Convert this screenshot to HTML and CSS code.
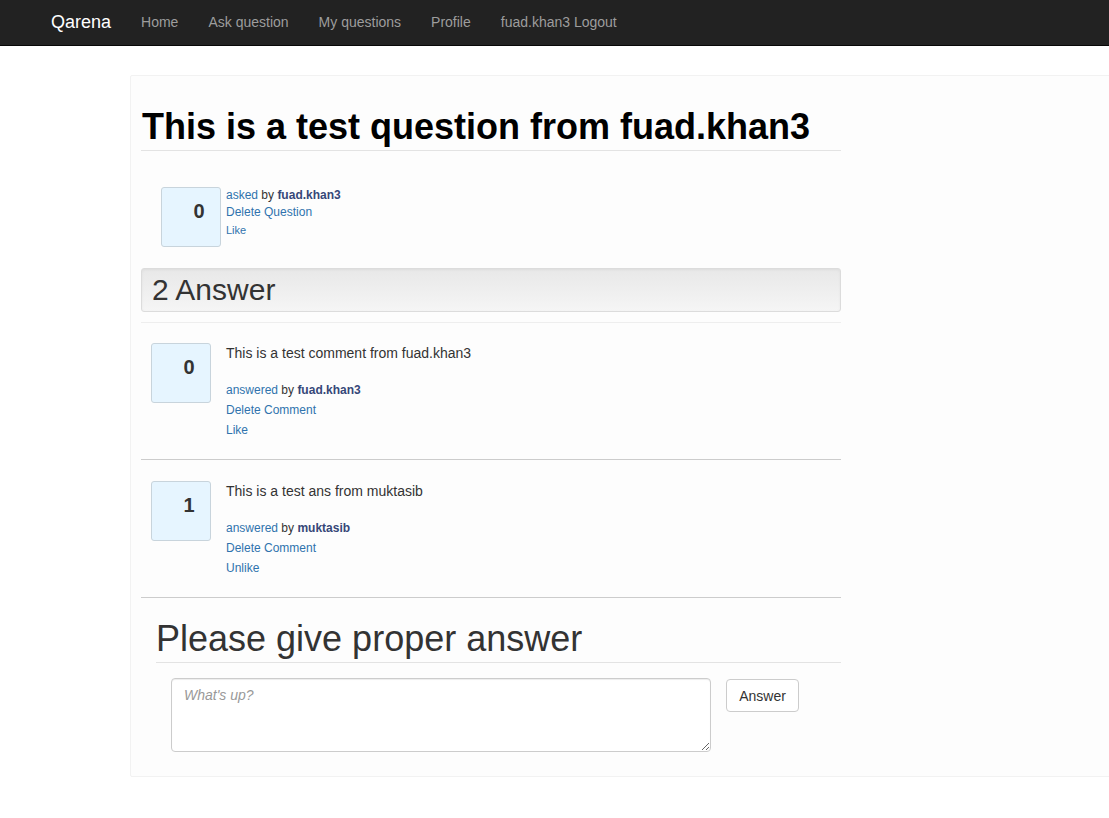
FILE: index.html
```html
<!DOCTYPE html>
<html>
<head>
<meta charset="utf-8">
<title>Qarena</title>
<link rel="stylesheet" href="styles.css">
</head>
<body>
<nav class="navbar">
  <a class="brand" href="#">Qarena</a>
  <ul class="nav-links">
    <li><a href="#">Home</a></li>
    <li><a href="#">Ask question</a></li>
    <li><a href="#">My questions</a></li>
    <li><a href="#">Profile</a></li>
    <li><a href="#">fuad.khan3 Logout</a></li>
  </ul>
</nav>
<main class="page">
  <section class="panel">
    <div class="col">
      <h1 class="q-title">This is a test question from fuad.khan3</h1>
      <div class="question-row">
        <div class="vote">0</div>
        <div class="q-meta">
          <div><a href="#">asked</a> by <a class="user" href="#">fuad.khan3</a></div>
          <div><a href="#">Delete Question</a></div>
          <div class="small"><a href="#">Like</a></div>
        </div>
      </div>
      <div class="well">2 Answer</div>
      <hr class="hr-light">
      <div class="answer">
        <div class="vote">0</div>
        <div class="a-body">
          <p class="a-text">This is a test comment from fuad.khan3</p>
          <div class="a-meta">
            <div><a href="#">answered</a> by <a class="user" href="#">fuad.khan3</a></div>
            <div><a href="#">Delete Comment</a></div>
            <div><a href="#">Like</a></div>
          </div>
        </div>
      </div>
      <hr class="hr-dark">
      <div class="answer">
        <div class="vote">1</div>
        <div class="a-body">
          <p class="a-text">This is a test ans from muktasib</p>
          <div class="a-meta">
            <div><a href="#">answered</a> by <a class="user" href="#">muktasib</a></div>
            <div><a href="#">Delete Comment</a></div>
            <div><a href="#">Unlike</a></div>
          </div>
        </div>
      </div>
      <hr class="hr-dark">
      <div class="reply">
        <h2 class="reply-title">Please give proper answer</h2>
        <form class="reply-form">
          <textarea class="reply-input" placeholder="What's up?"></textarea>
          <button type="button" class="btn">Answer</button>
        </form>
      </div>
    </div>
  </section>
</main>
</body>
</html>
```

FILE: styles.css
```css
html, body {
  margin: 0;
  padding: 0;
  overflow-x: hidden;
  background: #fff;
  font-family: "Liberation Sans", Arial, Helvetica, sans-serif;
  font-size: 14px;
  line-height: 1.42857;
  color: #333;
}

a {
  color: #2f73ad;
  text-decoration: none;
}

.navbar {
  display: flex;
  align-items: center;
  height: 46px;
  box-sizing: border-box;
  background: #222;
  border-bottom: 1px solid #080808;
  padding: 0 0 2px 36px;
}

.brand {
  color: #fff;
  font-size: 18px;
  line-height: 20px;
  padding: 0 15px;
}

.nav-links {
  display: flex;
  list-style: none;
  margin: 0;
  padding: 0;
}

.nav-links a {
  display: block;
  color: #9d9d9d;
  font-size: 14px;
  line-height: 20px;
  padding: 0 15px;
}

.page {
  padding: 29px 0 40px 130px;
}

.panel {
  width: 1000px;
  background: #fdfdfd;
  border: 1px solid #f2f2f2;
  border-radius: 2px;
  padding: 31px 0 24px 10px;
  box-sizing: border-box;
}

.col {
  width: 700px;
}

.q-title {
  margin: 0;
  font-size: 36px;
  font-weight: bold;
  line-height: 39.6px;
  color: #000;
  padding: 0 0 3px 1px;
  border-bottom: 1px solid #e3e3e3;
}

.question-row {
  display: flex;
  align-items: flex-start;
  margin: 36px 0 0 20px;
}

.vote {
  width: 60px;
  height: 60px;
  box-sizing: border-box;
  background: #e6f5ff;
  border: 1px solid #c8d4dc;
  border-radius: 3px;
  padding: 12px 0 0 16px;
  text-align: center;
  font-size: 20px;
  font-weight: bold;
  line-height: 22px;
  color: #333;
  flex: none;
}

.q-meta {
  margin-left: 5px;
  font-size: 12px;
  line-height: 17px;
}

.q-meta .small {
  font-size: 11px;
  line-height: 18px;
}

.user {
  color: #364778;
  font-weight: bold;
}

.well {
  margin-top: 21px;
  height: 44px;
  box-sizing: border-box;
  padding: 4px 10px;
  font-size: 30px;
  line-height: 33px;
  color: #333;
  background: linear-gradient(to bottom, #e8e8e8 0%, #f5f5f5 100%);
  border: 1px solid #dcdcdc;
  border-radius: 3px;
  box-shadow: inset 0 1px 3px rgba(0,0,0,.05), 0 1px 0 rgba(255,255,255,.1);
}

hr {
  margin: 0;
  border: 0;
  height: 1px;
}

.hr-light {
  margin-top: 10px;
  background: #eee;
}

.hr-dark {
  background: #ccc;
}

.answer {
  display: flex;
  align-items: flex-start;
  padding: 20px 0 19px 10px;
}

.hr-dark + .answer {
  padding-top: 21px;
}

.a-body {
  margin-left: 15px;
}

.a-text {
  margin: 0;
  font-size: 14px;
  line-height: 20px;
  color: #333;
}

.a-meta {
  margin-top: 17px;
  font-size: 12px;
  line-height: 20px;
}

.reply {
  padding: 21px 0 0 15px;
}

.reply-title {
  margin: 0;
  font-size: 36px;
  font-weight: normal;
  line-height: 39.6px;
  color: #333;
  padding-bottom: 4px;
  border-bottom: 1px solid #e3e3e3;
}

.reply-form {
  display: flex;
  align-items: flex-start;
  gap: 15px;
  margin: 15px 0 0 15px;
}

.reply-input {
  width: 540px;
  height: 74px;
  box-sizing: border-box;
  padding: 6px 12px;
  font-family: "Liberation Sans", Arial, sans-serif;
  font-size: 14px;
  line-height: 20px;
  color: #555;
  background: #fff;
  border: 1px solid #ccc;
  border-radius: 4px;
  box-shadow: inset 0 1px 1px rgba(0,0,0,.075);
  resize: vertical;
}

.reply-input::placeholder {
  color: #999;
  font-style: italic;
}

.btn {
  margin-top: 1px;
  width: 73px;
  height: 33px;
  box-sizing: border-box;
  padding: 6px 12px;
  font-family: "Liberation Sans", Arial, sans-serif;
  font-size: 14px;
  line-height: 20px;
  color: #333;
  background: #fff;
  border: 1px solid #ccc;
  border-radius: 4px;
  cursor: pointer;
}
```
